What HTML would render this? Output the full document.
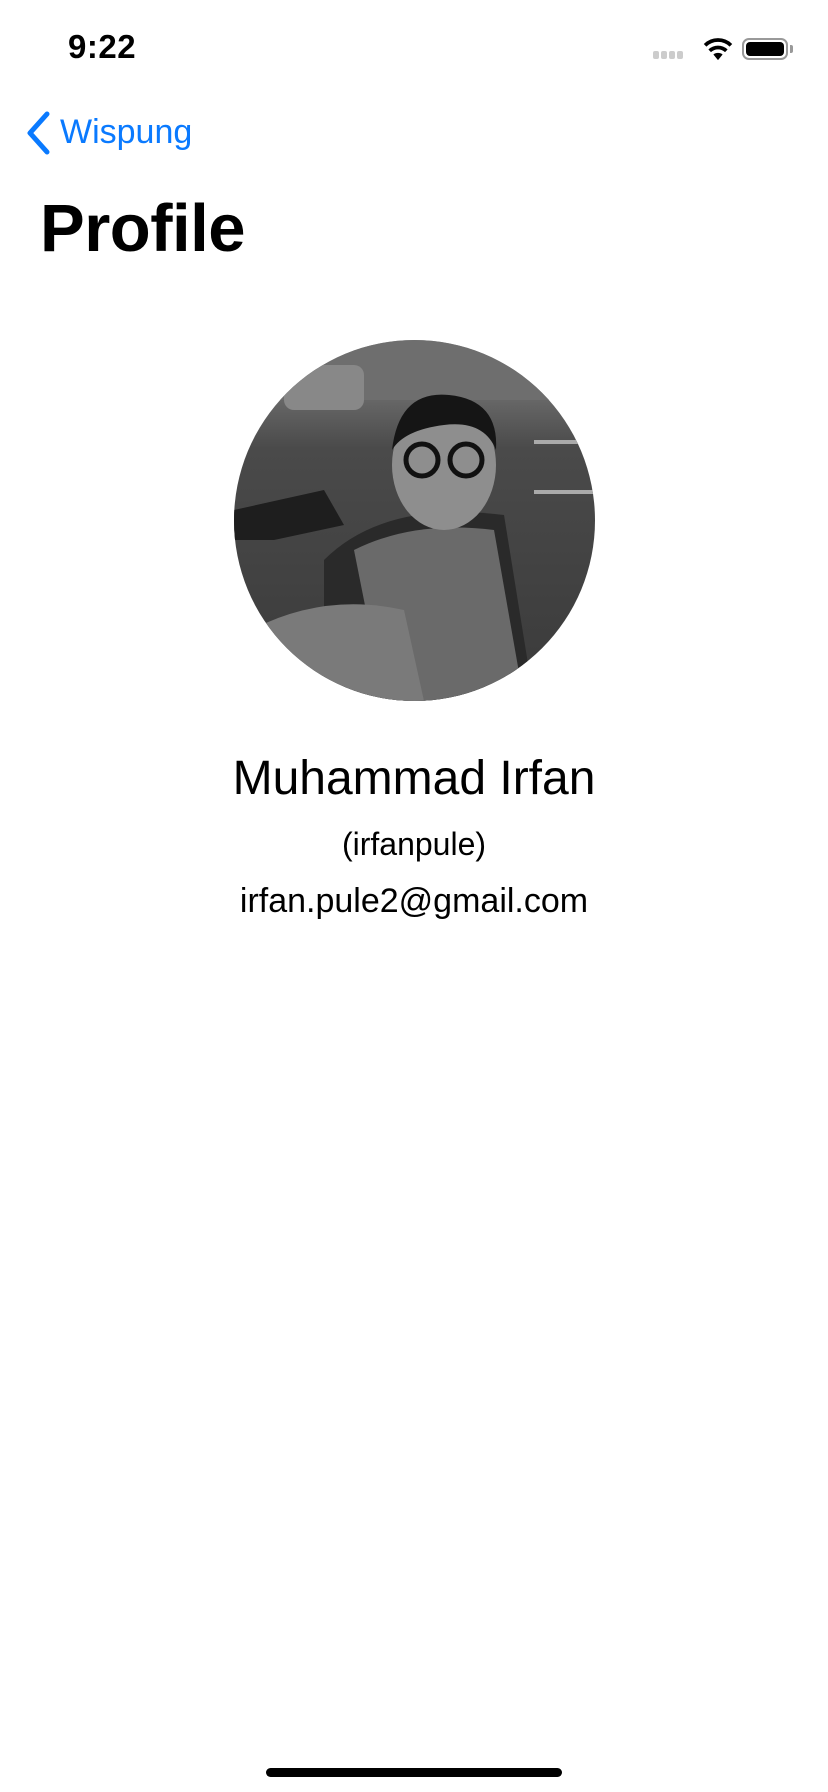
<!DOCTYPE html>
<html><head><meta charset="utf-8"><style>
html,body{margin:0;padding:0;background:#fff;}
body{width:828px;height:1792px;position:relative;overflow:hidden;font-family:"Liberation Sans",sans-serif;}
.abs{position:absolute;}
</style></head><body>
<div class="abs" style="left:68px;top:28px;font-size:33px;font-weight:bold;letter-spacing:0.5px;">9:22</div>
<div class="abs" style="left:653px;top:46px;">
 <span style="display:inline-block;width:6px;height:8px;background:#ccc;border-radius:2px;margin-right:2px"></span><span style="display:inline-block;width:6px;height:8px;background:#ccc;border-radius:2px;margin-right:2px"></span><span style="display:inline-block;width:6px;height:8px;background:#ccc;border-radius:2px;margin-right:2px"></span><span style="display:inline-block;width:6px;height:8px;background:#ccc;border-radius:2px"></span>
</div>
<svg class="abs" style="left:702px;top:37px" width="32" height="24" viewBox="0 0 34 26"><path d="M17 25 L12 19 A8 8 0 0 1 22 19 Z" fill="#000"/><path d="M8 15 A13 13 0 0 1 26 15" stroke="#000" stroke-width="4" fill="none"/><path d="M3 9 A20 20 0 0 1 31 9" stroke="#000" stroke-width="4" fill="none"/></svg>
<div class="abs" style="left:742px;top:38px;width:46px;height:22px;border:2px solid #999;border-radius:7px;box-sizing:border-box;"><div style="position:absolute;left:2px;top:2px;right:2px;bottom:2px;background:#000;border-radius:4px"></div></div>
<div class="abs" style="left:790px;top:45px;width:3px;height:8px;background:#999;border-radius:0 2px 2px 0"></div>
<svg class="abs" style="left:24px;top:111px" width="28" height="44" viewBox="0 0 28 44"><path d="M23 3 L6 22 L23 41" stroke="#0a7aff" stroke-width="5" fill="none" stroke-linecap="round" stroke-linejoin="round"/></svg>
<div class="abs" style="left:60px;top:113px;font-size:34px;color:#0a7aff;">Wispung</div>
<div class="abs" style="left:40px;top:190px;font-size:67px;font-weight:bold;letter-spacing:-0.5px;">Profile</div>
<svg class="abs" style="left:234px;top:340px" width="361" height="361" viewBox="0 0 361 361">
<defs><clipPath id="c"><circle cx="180.5" cy="180.5" r="180.5"/></clipPath>
<linearGradient id="g" x1="0" y1="0" x2="0" y2="1"><stop offset="0" stop-color="#8a8a8a"/><stop offset="0.3" stop-color="#4a4a4a"/><stop offset="1" stop-color="#3a3a3a"/></linearGradient></defs>
<g clip-path="url(#c)">
<rect width="361" height="361" fill="url(#g)"/>
<rect x="0" y="0" width="361" height="60" fill="#6e6e6e"/>
<rect x="50" y="25" width="80" height="45" rx="10" fill="#888"/>
<path d="M0 170 L90 150 L110 185 L40 200 L0 200 Z" fill="#1e1e1e"/>
<path d="M90 220 Q150 160 270 175 L300 361 L90 361 Z" fill="#2a2a2a"/>
<path d="M120 210 Q180 180 260 190 L290 361 L150 361 Z" fill="#6a6a6a"/>
<path d="M0 300 Q80 250 170 270 L190 361 L0 361 Z" fill="#7a7a7a"/>
<ellipse cx="210" cy="125" rx="52" ry="65" fill="#8e8e8e"/>
<path d="M158 110 Q165 50 215 55 Q265 60 262 110 Q250 80 210 85 Q170 90 158 110Z" fill="#151515"/>
<circle cx="188" cy="120" r="16" fill="none" stroke="#111" stroke-width="5"/>
<circle cx="232" cy="120" r="16" fill="none" stroke="#111" stroke-width="5"/>
<rect x="300" y="100" width="61" height="4" fill="#aaa"/>
<rect x="300" y="150" width="61" height="4" fill="#aaa"/>
</g></svg>
<div class="abs" style="left:0;width:828px;top:751px;text-align:center;font-size:48px;">Muhammad Irfan</div>
<div class="abs" style="left:0;width:828px;top:826px;text-align:center;font-size:32px;">(irfanpule)</div>
<div class="abs" style="left:0;width:828px;top:882px;text-align:center;font-size:34px;">irfan.pule2@gmail.com</div>
<div class="abs" style="left:266px;top:1768px;width:296px;height:9px;background:#000;border-radius:5px"></div>
</body></html>
